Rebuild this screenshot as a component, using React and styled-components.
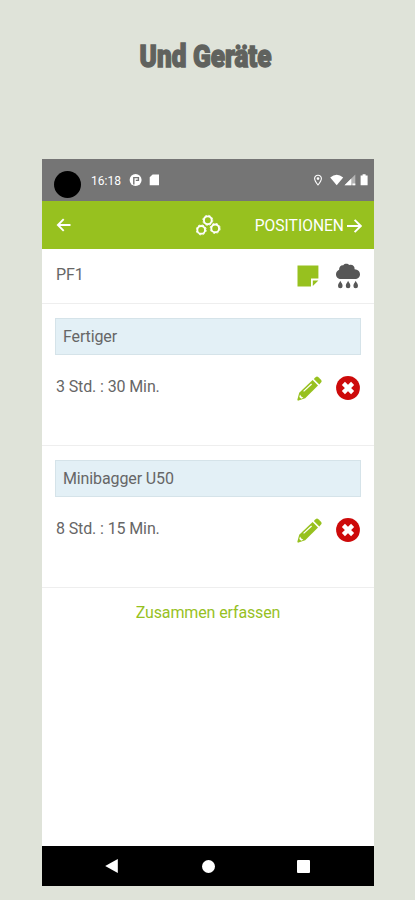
import styled, { createGlobalStyle } from 'styled-components';

const machines = [
    { name: 'Fertiger', time: '3 Std. : 30 Min.' },
    { name: 'Minibagger U50', time: '8 Std. : 15 Min.' },
];

const gears = [
    { x: 11.8, y: 6.3 },
    { x: 5.2, y: 15.9 },
    { x: 19.2, y: 14.4 },
];

function GearsIcon() {
    return (
        <svg width="26" height="22" viewBox="0 0 26 22" fill="none" stroke="#fff">
            {gears.map((g) => (
                <g key={g.x} transform={`translate(${g.x} ${g.y})`}>
                    <circle r="3.9" strokeWidth="1.9" />
                    <circle r="5" strokeWidth=".9" strokeDasharray="2.2 1.73" />
                </g>
            ))}
        </svg>
    );
}

function ArrowIcon({ flip }) {
    return (
        <svg width="15" height="14" viewBox="0 0 15 14" fill="none" stroke="#fff" strokeWidth="1.9">
            <path d={flip ? 'M0 7H14M7.6 .8L13.8 7L7.6 13.2' : 'M14.5 7H2M7.7 1.2L1.9 7L7.7 12.8'} />
        </svg>
    );
}

function NoteIcon() {
    return (
        <svg width="22" height="22" viewBox="0 0 22 22" fill="#97c11f">
            <path d="M.5 .5H21.4V13.6H14V21.4H.5Z" />
            <path d="M15.8 15.4H21.4L15.8 21Z" />
        </svg>
    );
}

function RainIcon() {
    return (
        <svg width="24" height="26" viewBox="0 0 24 26" fill="#575757">
            <path d="M5 16C2 16 0 14 0 11.2C0 9 1.5 7.3 3.1 6.7C2.9 3.7 5 1.9 7.3 2.2C8.6 .3 12 .3 13.2 2C16.2 1.1 18.9 3 18.6 6.2C21.8 6.4 24 8.4 24 11.2C24 14 21.9 16 19 16Z" />
            <path d="M4.3 17.8C5.2 20 6.6 20.8 6.6 22.9A2.3 2.3 0 0 1 2 22.9C2 20.8 3.4 20 4.3 17.8Z" />
            <path d="M12.1 17.8C13 20 14.4 20.8 14.4 22.9A2.3 2.3 0 0 1 9.8 22.9C9.8 20.8 11.2 20 12.1 17.8Z" />
            <path d="M19.7 17.8C20.6 20 22 20.8 22 22.9A2.3 2.3 0 0 1 17.4 22.9C17.4 20.8 18.8 20 19.7 17.8Z" />
        </svg>
    );
}

function PencilIcon() {
    return (
        <svg width="25" height="25" viewBox="0 0 25 25">
            <g fill="#97c11f">
                <path d="M18.6 1.2Q20 0 21.4 1.2L24 3.8Q25.2 5.2 24 6.6L22.3 8.4L16.8 3Z" />
                <path d="M15.6 4.1L21 9.5L8.2 22.2L1.5 24.6Q.2 24.9 .4 23.5L2.2 16.7Z" />
            </g>
            <path d="M6.6 15.4L14.6 8" stroke="#fff" strokeWidth="1.2" />
            <path d="M3 18.6L4.3 20.6L6.4 21.8L4.2 22.7L2.3 20.9Z" fill="#fff" />
        </svg>
    );
}

function DeleteIcon() {
    return (
        <svg width="24" height="24" viewBox="0 0 24 24">
            <circle cx="12" cy="12" r="11.9" fill="#cd0a0a" />
            <path d="M7.4 7.4L16.6 16.6M16.6 7.4L7.4 16.6" stroke="#fff" strokeWidth="4.4" />
        </svg>
    );
}

function NoticeIcons() {
    return (
        <svg width="32" height="14" viewBox="0 0 32 14" fill="#fff">
            <circle cx="6.6" cy="7" r="6" />
            <path d="M4.8 11.6V4.6H9.4V7.4H6.8" fill="none" stroke="#757575" strokeWidth="1.4" />
            <path d="M23.6 1.5H30V12.3H20.7V4.3Z" />
        </svg>
    );
}

function SignalIcons() {
    return (
        <svg width="56" height="14" viewBox="0 0 56 14" fill="#fff">
            <path d="M5 2.2A3.3 3.3 0 0 1 8.4 5.5C8.4 7.8 5 12 5 12S1.6 7.8 1.6 5.5A3.3 3.3 0 0 1 5 2.2Z" fill="none" stroke="#fff" strokeWidth="1.1" />
            <circle cx="5" cy="5.6" r="1.3" />
            <path d="M17.2 4.4Q23.7 -.8 30.2 4.4L23.7 12.3Z" />
            <path d="M31.5 12.3L42.3 1.6V12.3Z" opacity=".45" />
            <path d="M31.5 12.3L38.3 5.5V12.3ZM39.5 10.5H42.3V12.3H39.5Z" />
            <path d="M49.6 1.2H52.6V2.4H54.6V12.3H47.6V2.4H49.6Z" />
        </svg>
    );
}

function App() {
    return (
        <Page>
            <GlobalStyle />
            <Title>Und Geräte</Title>
            <Phone>
                <StatusBar>
                    <Camera />
                    <Clock>16:18</Clock>
                    <NoticeIcons />
                    <Spacer />
                    <SignalIcons />
                </StatusBar>
                <AppBar>
                    <ArrowIcon />
                    <GearsIcon />
                    <NextButton>
                        POSITIONEN
                        <ArrowIcon flip />
                    </NextButton>
                </AppBar>
                <Project>
                    <Label>PF1</Label>
                    <Actions $gap="17px">
                        <NoteIcon />
                        <RainIcon />
                    </Actions>
                </Project>
                {machines.map((machine) => (
                    <Machine key={machine.name}>
                        <MachineName>{machine.name}</MachineName>
                        <MachineRow>
                            <Label>{machine.time}</Label>
                            <Actions $gap="14px">
                                <PencilIcon />
                                <DeleteIcon />
                            </Actions>
                        </MachineRow>
                    </Machine>
                ))}
                <CaptureLink>Zusammen erfassen</CaptureLink>
                <Spacer />
                <NavBar>
                    <svg width="14" height="16" viewBox="0 0 14 16" fill="#fff">
                        <path d="M.2 8L12.8 1V15Z" />
                    </svg>
                    <NavHome />
                    <NavRecent />
                </NavBar>
            </Phone>
        </Page>
    );
}

const GlobalStyle = createGlobalStyle`
  body {
    margin: 0;
    background: #dfe3d9;
    font-family: Roboto, sans-serif;
  }

  * {
    box-sizing: border-box;
  }

  svg {
    display: block;
    flex: none;
  }
`;

const Page = styled.div`
  height: 900px;
  display: flex;
  flex-direction: column;
  align-items: center;
  overflow: hidden;
`;

const Title = styled.h1`
  height: 159px;
  margin: 0;
  padding-top: 37px;
  color: #60625e;
  font-size: 31.5px;
  line-height: 40px;
  font-weight: 900;
  white-space: nowrap;
  transform: translateX(-2px) scaleX(0.83);
  -webkit-text-stroke: 1.4px #60625e;
`;

const Phone = styled.div`
  width: 332px;
  height: 727px;
  margin-left: 1px;
  display: flex;
  flex-direction: column;
  background: #fff;
`;

const StatusBar = styled.div`
  height: 42px;
  flex: none;
  display: flex;
  align-items: center;
  padding: 0 5px 0 12px;
  background: #757575;
`;

const Camera = styled.div`
  width: 27px;
  height: 27px;
  margin-top: 8px;
  border-radius: 50%;
  background: #000;
`;

const Clock = styled.span`
  width: 38px;
  margin: 1px 0 0 10px;
  color: #fff;
  font-size: 12px;
`;

const Spacer = styled.div`
  flex: 1;
`;

const AppBar = styled.div`
  height: 48px;
  flex: none;
  display: grid;
  grid-template-columns: 1fr 26px 1fr;
  align-items: center;
  padding: 0 12px 0 14px;
  background: #97c11f;
`;

const NextButton = styled.div`
  display: flex;
  align-items: center;
  justify-content: flex-end;
  gap: 3px;
  padding-top: 1px;
  color: #fff;
  font-size: 15.6px;
  line-height: 20px;
`;

const Project = styled.div`
  height: 55px;
  flex: none;
  display: flex;
  justify-content: space-between;
  padding: 14px 14px 0;
  border-bottom: 1px solid #eee;
`;

const Label = styled.span`
  color: #666;
  font-size: 16px;
  line-height: 24px;
  letter-spacing: -0.12px;
`;

const Actions = styled.div`
  height: 26px;
  display: flex;
  align-items: center;
  gap: ${({ $gap }) => $gap};
`;

const Machine = styled.div`
  height: 142px;
  flex: none;
  padding: 14px 13px 0;
  border-bottom: 1px solid #eee;
`;

const MachineName = styled.div`
  height: 37px;
  padding: 0 7px;
  border: 1px solid #d5e3e9;
  background: #e3f0f6;
  color: #666;
  font-size: 16px;
  line-height: 36px;
  letter-spacing: -0.12px;
`;

const MachineRow = styled.div`
  display: flex;
  justify-content: space-between;
  padding: 20px 1px 0;
`;

const CaptureLink = styled.div`
  padding-top: 15px;
  color: #97c11f;
  font-size: 16px;
  line-height: 20px;
  letter-spacing: -0.12px;
  text-align: center;
`;

const NavBar = styled.div`
  height: 40px;
  display: flex;
  align-items: center;
  justify-content: space-between;
  padding: 0 64px 0 63px;
  background: #000;
`;

const NavHome = styled.div`
  width: 13px;
  height: 13px;
  border-radius: 50%;
  background: #fff;
`;

const NavRecent = styled(NavHome)`
  border-radius: 1px;
`;

export default App;
